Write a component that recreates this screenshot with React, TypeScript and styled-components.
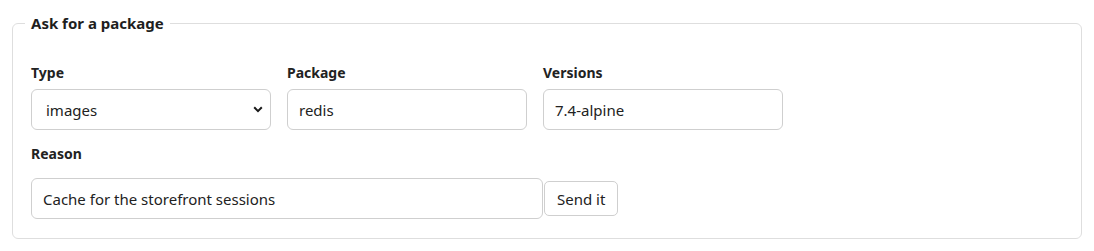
import React from "react";
import styled, { createGlobalStyle } from "styled-components";

const Global = createGlobalStyle`
  html, body { margin: 0; padding: 0; background: #ffffff; }
  body { font-family: "Noto Sans", "Open Sans", sans-serif; color: #222222; }
  * { box-sizing: border-box; }
`;

const Page = styled.div`
  padding: 12px 12px 0 12px;
`;

const Fieldset = styled.fieldset`
  margin: 0;
  border: 1px solid #dedede;
  border-radius: 6px;
  padding: 29px 18px 19px 18px;
  min-width: 0;
`;

const Legend = styled.legend`
  margin-left: -6px;
  padding: 0 6px;
  font-size: 15px;
  line-height: 22px;
  font-weight: 700;
  color: #1e1e1e;
`;

const Grid = styled.div`
  display: grid;
  grid-template-columns: repeat(3, 240px);
  column-gap: 16px;
`;

const Field = styled.div`
  display: flex;
  flex-direction: column;
`;

const Label = styled.label<{ $gap?: number }>`
  display: block;
  font-size: 14px;
  line-height: 20px;
  font-weight: 700;
  color: #222222;
  margin-bottom: ${(p) => p.$gap ?? 6}px;
`;

const controlBase = `
  font-family: "Noto Sans", "Open Sans", sans-serif;
  font-size: 15px;
  color: #222222;
  background: #ffffff;
  border: 1px solid #cfcfcf;
  border-radius: 6px;
  outline: none;
`;

const Input = styled.input<{ $w?: number; $h?: number }>`
  ${controlBase}
  width: ${(p) => (p.$w ? `${p.$w}px` : "100%")};
  height: ${(p) => p.$h ?? 41}px;
  padding: 0 11px;
`;

const SelectWrap = styled.div`
  position: relative;
  width: 240px;
  height: 41px;
`;

const Select = styled.select`
  ${controlBase}
  appearance: none;
  -webkit-appearance: none;
  width: 100%;
  height: 100%;
  padding: 0 30px 0 14px;
`;

const Chevron = styled.svg`
  position: absolute;
  right: 8px;
  top: 17px;
  width: 10px;
  height: 7px;
  pointer-events: none;
`;

const ReasonBlock = styled.div`
  margin-top: 14px;
`;

const ReasonRow = styled.div`
  display: flex;
  align-items: center;
  gap: 1px;
`;

const Button = styled.button`
  font-family: "Noto Sans", "Open Sans", sans-serif;
  font-size: 15px;
  color: #222222;
  background: #ffffff;
  border: 1px solid #cfcfcf;
  border-radius: 5px;
  height: 35px;
  padding: 0 12px;
  cursor: pointer;
`;

export default function App() {
  return (
    <>
      <Global />
      <Page>
        <Fieldset>
          <Legend>Ask for a package</Legend>
          <Grid>
            <Field>
              <Label>Type</Label>
              <SelectWrap>
                <Select defaultValue="images">
                  <option value="images">images</option>
                  <option value="charts">charts</option>
                  <option value="packages">packages</option>
                </Select>
                <Chevron viewBox="0 0 10 7">
                  <path d="M1.2 1.3 L5 5.1 L8.8 1.3" fill="none" stroke="#1a1a1a" strokeWidth="2" />
                </Chevron>
              </SelectWrap>
            </Field>
            <Field>
              <Label>Package</Label>
              <Input defaultValue="redis" />
            </Field>
            <Field>
              <Label>Versions</Label>
              <Input defaultValue="7.4-alpine" />
            </Field>
          </Grid>
          <ReasonBlock>
            <Label $gap={14}>Reason</Label>
            <ReasonRow>
              <Input defaultValue="Cache for the storefront sessions" $w={512} $h={41} />
              <Button type="button">Send it</Button>
            </ReasonRow>
          </ReasonBlock>
        </Fieldset>
      </Page>
    </>
  );
}
